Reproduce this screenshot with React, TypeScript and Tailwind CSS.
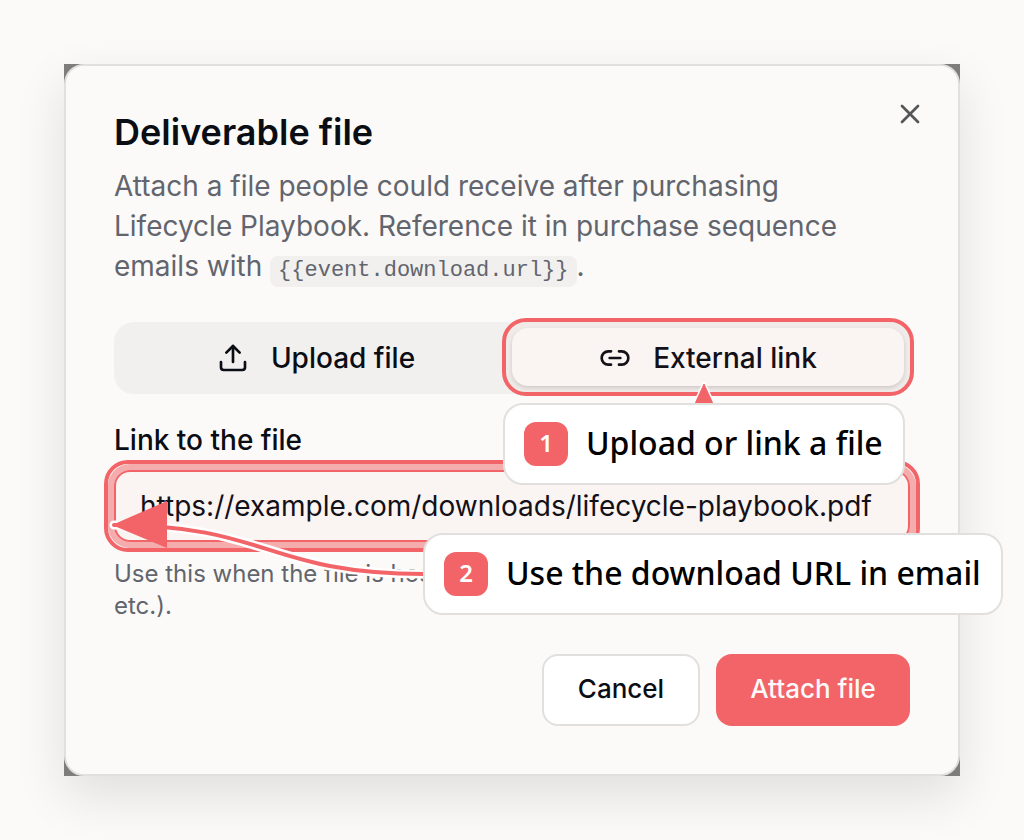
import { useState } from 'react'
import { Link2, Upload, X } from 'lucide-react'
import clsx from 'clsx'

const TABS = [
  { id: 'upload', label: 'Upload file', icon: Upload },
  { id: 'link', label: 'External link', icon: Link2 },
]

export default function App() {
  const [tab, setTab] = useState('link')
  const [url, setUrl] = useState('https://example.com/downloads/lifecycle-playbook.pdf')

  return (
    <main className="min-h-screen overflow-hidden bg-[#fbfaf8] p-16 font-['Inter','Liberation_Sans',sans-serif] text-[#0b0d14]">
      {/* backdrop shows behind the rounded corners */}
      <div className="bg-[#7d7d7c] shadow-[0_20px_48px_rgba(0,0,0,0.11)]">
        <section
          role="dialog"
          aria-labelledby="dialog-title"
          className="relative rounded-[20px] border-2 border-[#e1e0df] bg-[#fbfaf8] p-12"
        >
          <button type="button" aria-label="Close" className="absolute top-8 right-8 text-[#55565a]">
            <X size={32} />
          </button>

          <h1 id="dialog-title" className="text-[36px] leading-9 font-semibold">Deliverable file</h1>
          <p className="mt-4 pr-10 text-[28px] leading-10 text-[#62656d]">
            Attach a file people could receive after purchasing Lifecycle Playbook. Reference it in purchase sequence
            emails with{' '}
            <code className="rounded-lg bg-[#f1f0ef] px-2 pt-0.5 pb-1 font-['Liberation_Mono',monospace] text-[22px] leading-none">
              {'{{event.download.url}}'}
            </code>
            .
          </p>

          <div className="mt-9 flex h-[72px] items-start rounded-[20px] bg-[#f1f0ef] p-[6px]">
            {TABS.map(({ id, label, icon: Icon }) => (
              <div key={id} className="relative flex-1">
                <button
                  type="button"
                  aria-pressed={tab === id}
                  onClick={() => setTab(id)}
                  className={clsx(
                    'flex h-[58px] w-full items-center justify-center gap-[22px] rounded-2xl pt-0.5 text-[28px] font-medium',
                    tab === id && 'bg-[#fbfaf8] shadow-[0_2px_4px_rgba(0,0,0,0.15)]',
                  )}
                >
                  <Icon size={32} />
                  {label}
                </button>
                {id === 'link' && (
                  <>
                    <Highlight />
                    <svg className="pointer-events-none absolute top-[54px] left-1/2 -ml-4 h-6 w-6" viewBox="0 0 24 24">
                      <path d="M12 2 22 24H2z" fill="#fff" stroke="#fff" strokeWidth="4" strokeLinejoin="round" />
                      <path d="M12 2 22 24H2z" fill="#f26468" stroke="#f26468" strokeLinejoin="round" />
                    </svg>
                    <Callout step={1} className="top-[75px] -left-[9px] z-10">Upload or link a file</Callout>
                  </>
                )}
              </div>
            ))}
          </div>

          <label htmlFor="file-url" className="mt-8 block text-[28px] leading-7 font-medium">Link to the file</label>
          <div className="relative mt-4">
            <input
              id="file-url"
              type="text"
              value={url}
              onChange={(e) => setUrl(e.target.value)}
              className="block h-[72px] w-full rounded-2xl border-2 border-[#f26468] px-6 text-[28px] ring-6 ring-[#f26468]/50 outline-none"
            />
            <Highlight />
            <svg className="pointer-events-none absolute top-6 -left-4 z-10 h-24 w-[340px]" viewBox="0 0 340 96" fill="none">
              <path d="M326 80C170 80 170 31 16 31" stroke="#fff" strokeWidth="9" strokeLinecap="round" />
              <path d="M326 80C170 80 170 31 16 31" stroke="#f26468" strokeWidth="4" strokeLinecap="round" />
              <path d="M14 31 69 7V54z" fill="#f26468" />
            </svg>
            <Callout step={2} className="top-[63px] left-[309px] z-20">Use the download URL in email</Callout>
          </div>
          <p className="mt-4 text-2xl leading-8 text-[#62656d]">
            Use this when the file is hosted somewhere else (Dropbox, Drive, etc.).
          </p>

          <div className="mt-8 flex justify-end gap-4 text-[26px] font-medium">
            <button type="button" className="h-[72px] min-w-[158px] rounded-2xl border-2 border-[#e1e0df] bg-white px-8 pb-1">
              Cancel
            </button>
            <button type="button" className="h-[72px] min-w-[194px] rounded-2xl bg-[#f26468] px-8 pb-1 text-[#fbfaf8]">
              Attach file
            </button>
          </div>
        </section>
      </div>
    </main>
  )
}

function Highlight() {
  return (
    <span className="pointer-events-none absolute -inset-[10px] rounded-3xl border-4 border-[#f26468] bg-[#f26468]/4" />
  )
}

function Callout({ step, className, children }: { step: number; className: string; children: string }) {
  return (
    <div
      className={clsx(
        "absolute flex h-[82px] items-center gap-[18px] rounded-[20px] border-2 border-[#e1e0df] bg-white pr-5 pl-[19px] font-['Noto_Sans',sans-serif] whitespace-nowrap text-black",
        className,
      )}
    >
      <span className="flex size-11 items-center justify-center rounded-xl bg-[#f26468] pb-0.5 text-2xl font-semibold text-white">
        {step}
      </span>
      <span className="pb-0.5 text-[32px] font-medium">{children}</span>
    </div>
  )
}
